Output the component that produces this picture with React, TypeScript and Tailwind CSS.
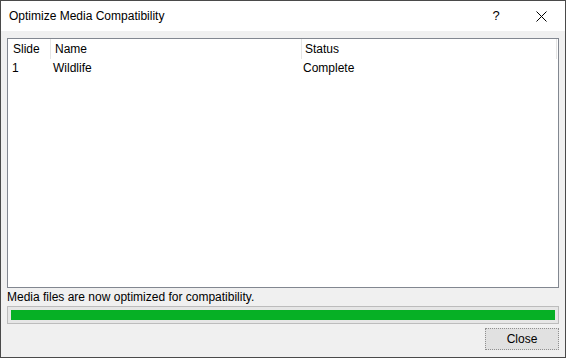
import React from "react";

export default function App() {
  const font = { fontFamily: '"Segoe UI", "Liberation Sans", Arial, sans-serif' };
  return (
    <div
      className="w-[566px] h-[358px] border border-[#4a4a4a] flex flex-col bg-[#f0f0f0] text-[12px] text-black overflow-hidden"
      style={font}
    >
      {/* Title bar */}
      <div className="h-[30px] bg-white flex items-center shrink-0">
        <div className="pl-[8px] flex-1 text-[12px] leading-none pb-[1px]">Optimize Media Compatibility</div>
        <div className="w-[46px] h-[30px] flex items-center justify-center text-[13px] pl-[2px]">?</div>
        <div className="w-[46px] h-[30px] flex items-center justify-center mr-[1px]">
          <svg width="11" height="11" viewBox="0 0 11 11">
            <path d="M0.5 0.5 L10.5 10.5 M10.5 0.5 L0.5 10.5" stroke="#000" strokeWidth="1" fill="none" />
          </svg>
        </div>
      </div>

      {/* Body */}
      <div className="flex-1 flex flex-col px-[6px] pt-[7px]">
        {/* List */}
        <div className="h-[250px] border border-[#828790] bg-white flex flex-col">
          <div className="h-[20px] flex items-stretch">
            <div className="w-[43px] pl-[5px] flex items-center border-r border-[#e5e5e5]">Slide</div>
            <div className="w-[251px] pl-[4px] flex items-center border-r border-[#e5e5e5]">Name</div>
            <div className="w-[255px] pl-[3px] flex items-center border-r border-[#e5e5e5]">Status</div>
          </div>
          <div className="h-[17px] flex items-center">
            <div className="w-[43px] pl-[4px]">1</div>
            <div className="w-[251px] pl-[2px]">Wildlife</div>
            <div className="w-[255px] pl-[1px]">Complete</div>
          </div>
        </div>

        {/* Status text */}
        <div className="h-[18px] flex items-center">
          Media files are now optimized for compatibility.
        </div>

        {/* Progress */}
        <div className="h-[18px] border border-[#bcbcbc] bg-[#e6e6e6] p-[3px]">
          <div className="h-full w-full bg-[#06b025]" />
        </div>

        {/* Button */}
        <div className="flex justify-end mt-[4px]">
          <div className="w-[74px] h-[22px] bg-[#e1e1e1] border border-dotted border-[#8f8f8f] p-[1px]">
            <div className="w-full h-full flex items-center justify-center">
              Close
            </div>
          </div>
        </div>
      </div>
    </div>
  );
}
